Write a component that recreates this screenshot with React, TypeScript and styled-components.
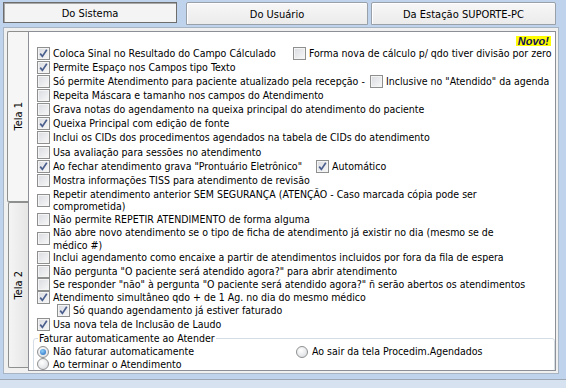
import React from "react";
import styled, { createGlobalStyle } from "styled-components";

const GlobalStyle = createGlobalStyle`
  html, body {
    margin: 0;
    padding: 0;
  }
  body {
    background: #bfd4ec;
    font-family: "DejaVu Sans Condensed", "DejaVu Sans", sans-serif;
    font-stretch: condensed;
    font-size: 10.5px;
    color: #000;
  }
`;

interface IOption {
  label: React.ReactNode;
  h: number;
  checked?: boolean;
  lines?: number;
  indent?: number;
  cell?: number;
  extra?: { label: string; checked?: boolean };
}

// row heights follow the uneven spacing of the original form
const options: IOption[] = [
  {
    label: "Coloca Sinal no Resultado do Campo Cálculado",
    h: 14,
    checked: true,
    cell: 256,
    extra: { label: "Forma nova de cálculo p/ qdo tiver divisão por zero" },
  },
  { label: "Permite Espaço nos Campos tipo Texto", h: 14, checked: true },
  {
    label: "Só permite Atendimento para paciente atualizado pela recepção -",
    h: 14,
    cell: 333,
    extra: { label: 'Inclusive no "Atendido" da agenda' },
  },
  { label: "Repeita Máscara e tamanho nos campos do Atendimento", h: 14 },
  { label: "Grava notas do agendamento na queixa principal do atendimento do paciente", h: 14 },
  { label: "Queixa Principal com edição de fonte", h: 14.25, checked: true },
  { label: "Inclui os CIDs dos procedimentos agendados na tabela de CIDs do atendimento", h: 14.25 },
  { label: "Usa avaliação para sessões no atendimento", h: 14.25 },
  {
    label: 'Ao fechar atendimento grava "Prontuário Eletrônico"',
    h: 14,
    checked: true,
    cell: 279,
    extra: { label: "Automático", checked: true },
  },
  { label: "Mostra informações TISS para atendimento de revisão", h: 14 },
  {
    label: (
      <>
        Repetir atendimento anterior SEM SEGURANÇA (ATENÇÃO - Caso marcada cópia pode ser
        <br />
        comprometida)
      </>
    ),
    h: 26.25,
    lines: 2,
  },
  { label: "Não permite REPETIR ATENDIMENTO de forma alguma", h: 12.5 },
  {
    label: (
      <>
        Não abre novo atendimento se o tipo de ficha de atendimento já existir no dia (mesmo se de
        <br />
        médico #)
      </>
    ),
    h: 25,
    lines: 2,
  },
  { label: "Inclui agendamento como encaixe a partir de atendimentos incluidos por fora da fila de espera", h: 13.25 },
  { label: 'Não pergunta "O paciente será atendido agora?" para abrir atendimento', h: 13.75 },
  { label: 'Se responder "não" à pergunta "O paciente será atendido agora?" ñ serão abertos os atendimentos', h: 13.25 },
  { label: "Atendimento simultâneo qdo + de 1 Ag. no dia do mesmo médico", h: 13, checked: true },
  { label: "Só quando agendamento já estiver faturado", h: 13.25, checked: true, indent: 20 },
  { label: "Usa nova tela de Inclusão de Laudo", h: 13.75, checked: true },
];

const CheckBox = ({ checked }: { checked?: boolean }) => (
  <Box>
    {checked && (
      <svg width="11" height="11" viewBox="0 0 11 11">
        <path d="M2.2 5.6 L4.4 8.4 L8.8 1.8" fill="none" stroke="#4b5f8e" strokeWidth="1.7" />
      </svg>
    )}
  </Box>
);

const Radio = ({ checked }: { checked?: boolean }) => (
  <RadioCircle>{checked && <RadioDot />}</RadioCircle>
);

const App = () => {
  return (
    <Window>
      <GlobalStyle />
      <TabBar>
        <TopTab $active $width={174} $after={9}>
          Do Sistema
        </TopTab>
        <TopTab $width={182} $after={3}>
          Do Usuário
        </TopTab>
        <TopTab $width={185}>Da Estação SUPORTE-PC</TopTab>
      </TabBar>
      <Frame>
        <SideTabs>
          <SideTab $active $height={171}>
            <SideLabel>Tela 1</SideLabel>
          </SideTab>
          <SideTab $height={166}>
            <SideLabel>Tela 2</SideLabel>
          </SideTab>
        </SideTabs>
        <Page>
          <Badge>Novo!</Badge>
          {options.map((o, i) => (
            <Row key={i} $h={o.h} $indent={o.indent}>
              <Cell $width={o.cell}>
                <CheckBox checked={o.checked} />
                <Label $lines={o.lines}>{o.label}</Label>
              </Cell>
              {o.extra && (
                <Cell>
                  <CheckBox checked={o.extra.checked} />
                  <Label>{o.extra.label}</Label>
                </Cell>
              )}
            </Row>
          ))}
          <Group>
            <Legend>Faturar automaticamente ao Atender</Legend>
            <RadioGrid>
              <RadioItem>
                <Radio checked />
                <Label>Não faturar automaticamente</Label>
              </RadioItem>
              <RadioItem>
                <Radio />
                <Label>Ao sair da tela Procedim.Agendados</Label>
              </RadioItem>
              <RadioItem>
                <Radio />
                <Label>Ao terminar o Atendimento</Label>
              </RadioItem>
            </RadioGrid>
          </Group>
        </Page>
      </Frame>
      <StatusStrip />
    </Window>
  );
};

const Window = styled.div`
  width: 566px;
  height: 388px;
  display: flex;
  flex-direction: column;
  background: #bfd4ec;
  overflow: hidden;
`;

const TabBar = styled.div`
  display: flex;
  padding: 2px 0 0 3px;
  height: 25px;
  box-sizing: border-box;
`;

const TopTab = styled.div<{ $active?: boolean; $width: number; $after?: number }>`
  width: ${(p) => p.$width}px;
  margin-right: ${(p) => p.$after ?? 0}px;
  height: ${(p) => (p.$active ? 21 : 23)}px;
  box-sizing: border-box;
  display: flex;
  align-items: center;
  justify-content: center;
  padding-top: 1px;
  font-size: 11px;
  border: 1px solid ${(p) => (p.$active ? "#6d6d6d" : "#9aa0a8")};
  border-radius: ${(p) => (p.$active ? "0" : "2px 2px 0 0")};
  background: ${(p) =>
    p.$active ? "#f4f4f4" : "linear-gradient(#f7f7f7, #ebebeb)"};
  box-shadow: ${(p) =>
    p.$active ? "inset 1px 1px 0 #a8a8a8" : "inset 1px 1px 0 #ffffff"};
`;

const Frame = styled.div`
  margin: 2px 0 0 3px;
  width: 556px;
  height: 347px;
  box-sizing: border-box;
  display: flex;
  padding: 3px 2px 2px 1px;
  background: #f0f0f0;
  border: 1px solid #a6b4c4;
`;

const SideTabs = styled.div`
  width: 23px;
  display: flex;
  flex-direction: column;
`;

const SideTab = styled.div<{ $active?: boolean; $height: number }>`
  height: ${(p) => p.$height}px;
  margin-left: ${(p) => (p.$active ? 2 : 3)}px;
  box-sizing: border-box;
  display: flex;
  align-items: center;
  justify-content: center;
  font-size: 11px;
  border: 1px solid #8e8f8f;
  border-right: none;
  border-radius: 2px 0 0 2px;
  background: ${(p) => (p.$active ? "#f6f6f6" : "linear-gradient(90deg, #f4f4f4, #e6e6e6)")};
`;

const SideLabel = styled.span`
  writing-mode: vertical-rl;
  transform: rotate(180deg);
  white-space: nowrap;
`;

const Page = styled.div`
  position: relative;
  flex: 1;
  display: flex;
  flex-direction: column;
  background: #fff;
  border: 1px solid #8c9096;
  padding: 14.5px 0 0 8px;
  overflow: hidden;
`;

const Badge = styled.span`
  position: absolute;
  top: 4px;
  right: 4px;
  padding: 0 2px;
  height: 10px;
  line-height: 10px;
  background: #ffff00;
  color: #10105a;
  font-family: "Liberation Sans", Arial, sans-serif;
  font-style: italic;
  font-weight: bold;
  font-size: 11px;
`;

const Row = styled.div<{ $h: number; $indent?: number }>`
  display: flex;
  align-items: center;
  flex: none;
  height: ${(p) => p.$h}px;
  padding-left: ${(p) => p.$indent ?? 0}px;
  white-space: nowrap;
`;

const Cell = styled.div<{ $width?: number }>`
  display: flex;
  align-items: center;
  flex: 0 0 ${(p) => (p.$width ? `${p.$width}px` : "auto")};
`;

const Box = styled.span`
  width: 13px;
  height: 13px;
  box-sizing: border-box;
  flex: none;
  display: flex;
  align-items: center;
  justify-content: center;
  margin-right: 3px;
  border: 1px solid #8e8f8f;
  background: linear-gradient(135deg, #d9dbe0, #f8f8f8);
  box-shadow: inset 0 0 0 1px #f4f4f4;
`;

const Label = styled.span<{ $lines?: number }>`
  line-height: ${(p) => (p.$lines === 2 ? 12.6 : 13)}px;
`;

const Group = styled.fieldset`
  margin: 1px 0 0 -4px;
  padding: 0 0 1px 3px;
  border: 1px solid #d5dde4;
  border-radius: 3px;
`;

const Legend = styled.legend`
  padding: 0 1px;
  margin-left: 1px;
  line-height: 13px;
`;

const RadioGrid = styled.div`
  display: grid;
  grid-template-columns: 259px 1fr;
  grid-auto-rows: 12.5px;
`;

const RadioItem = styled.div`
  display: flex;
  align-items: center;
  white-space: nowrap;
`;

const RadioCircle = styled.span`
  width: 12px;
  height: 12px;
  box-sizing: border-box;
  flex: none;
  margin-right: 4px;
  border-radius: 50%;
  border: 1px solid #8e8f8f;
  background: radial-gradient(circle at 40% 35%, #ffffff, #d6d8dc);
  display: flex;
  align-items: center;
  justify-content: center;
`;

const RadioDot = styled.span`
  width: 6px;
  height: 6px;
  border-radius: 50%;
  background: radial-gradient(circle at 40% 35%, #8fd0fb, #1d61b8);
`;

const StatusStrip = styled.div`
  flex: 1;
  margin-top: 5px;
  border-top: 1px solid #9ea8b4;
  background: #d6e2f0;
`;

export default App;
